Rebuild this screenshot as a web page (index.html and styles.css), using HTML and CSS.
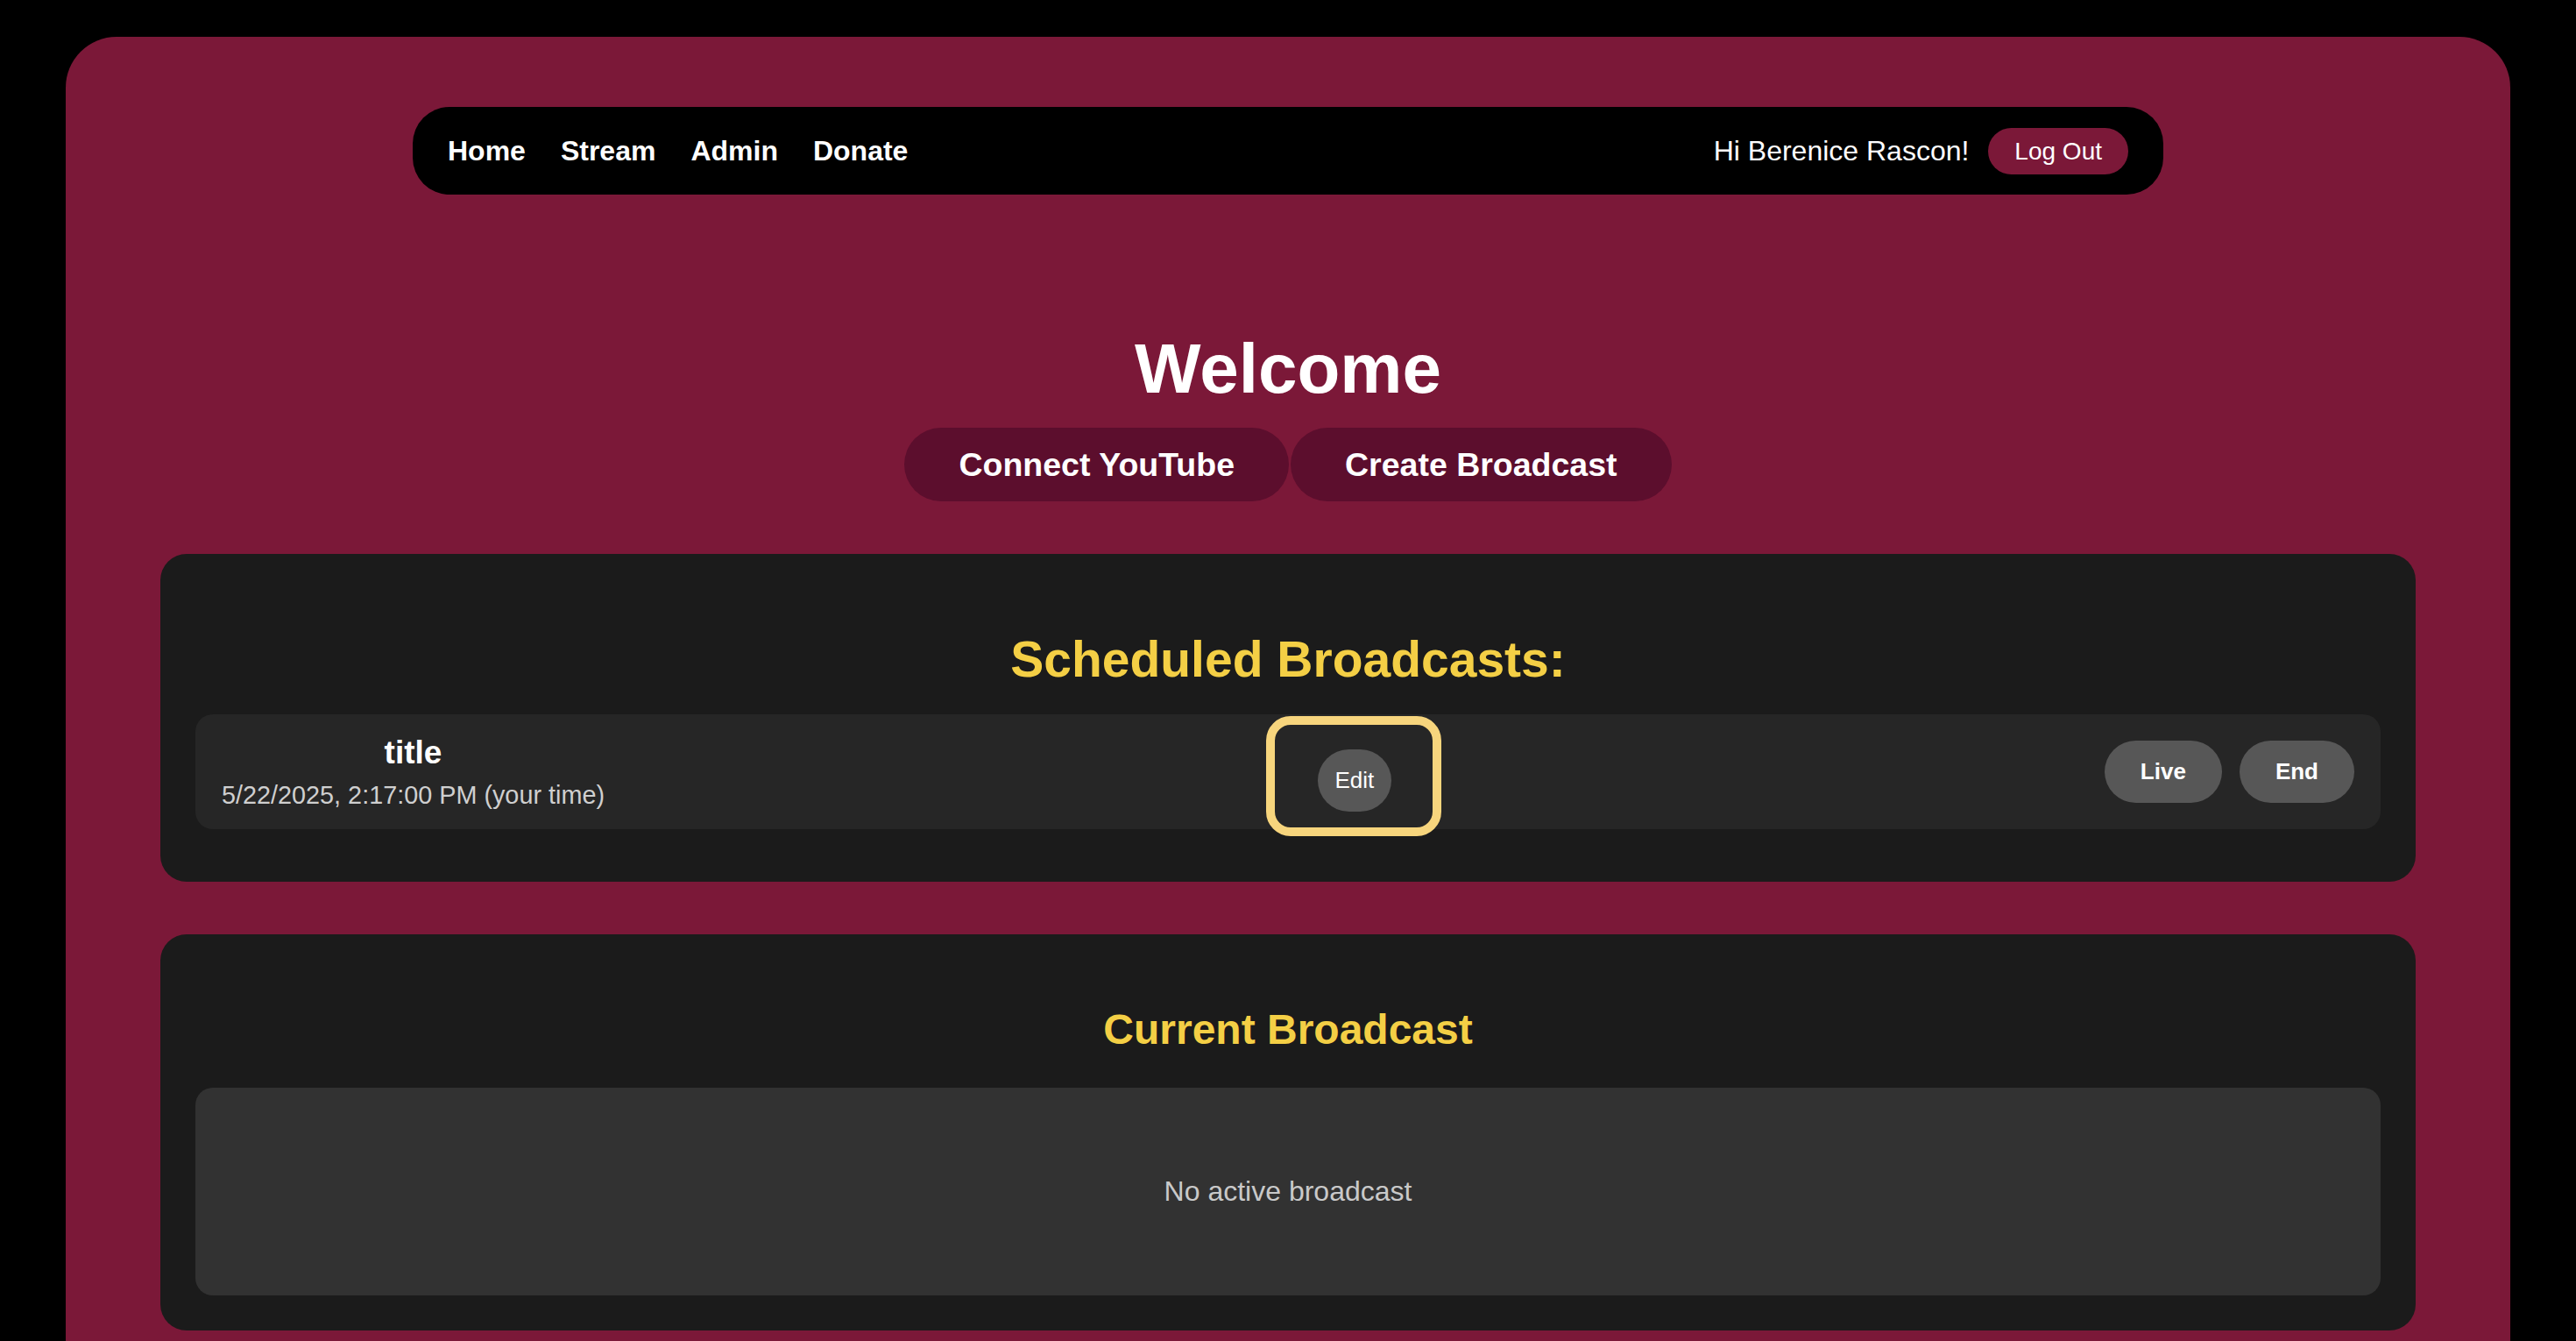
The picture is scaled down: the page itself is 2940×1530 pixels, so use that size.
FILE: index.html
```html
<!DOCTYPE html>
<html lang="en">
<head>
<meta charset="utf-8">
<title>Dashboard</title>
<link rel="stylesheet" href="styles.css">
</head>
<body>
<div class="frame">
  <nav class="nav">
    <div class="nav-links">
      <a class="nav-link" href="#">Home</a>
      <a class="nav-link" href="#">Stream</a>
      <a class="nav-link" href="#">Admin</a>
      <a class="nav-link" href="#">Donate</a>
    </div>
    <div class="nav-user">
      <span class="greeting">Hi Berenice Rascon!</span>
      <button class="logout">Log Out</button>
    </div>
  </nav>

  <section class="hero">
    <h1 class="hero-title">Welcome</h1>
    <div class="hero-actions">
      <button class="hero-btn">Connect YouTube</button>
      <button class="hero-btn">Create Broadcast</button>
    </div>
  </section>

  <section class="card card-scheduled">
    <h2 class="card-title card-title-lg">Scheduled Broadcasts:</h2>
    <div class="broadcast-row">
      <div class="broadcast-info">
        <div class="broadcast-name">title</div>
        <div class="broadcast-time">5/22/2025, 2:17:00 PM (your time)</div>
      </div>
      <div class="edit-wrap">
        <button class="pill-btn edit-btn">Edit</button>
        <span class="highlight"></span>
      </div>
      <div class="row-actions">
        <button class="pill-btn bold-btn">Live</button>
        <button class="pill-btn bold-btn">End</button>
      </div>
    </div>
  </section>

  <section class="card card-current">
    <h2 class="card-title card-title-md">Current Broadcast</h2>
    <div class="current-box">No active broadcast</div>
  </section>
</div>
</body>
</html>
```

FILE: styles.css
```css
* { box-sizing: border-box; }

html, body {
  margin: 0;
  padding: 0;
  background: #000;
}

body {
  font-family: "Liberation Sans", Arial, sans-serif;
  color: #fff;
  overflow: hidden;
}

button {
  font-family: "Liberation Sans", Arial, sans-serif;
  border: none;
  cursor: pointer;
}

.frame {
  margin: 42px 75px 0;
  background: #7b1838;
  border-radius: 58px;
  padding: 80px 108px 120px;
  min-height: 1600px;
}

/* NAV */
.nav {
  max-width: 1998px;
  margin: 0 auto;
  height: 100px;
  background: #000;
  border-radius: 42px;
  padding: 0 40px;
  display: flex;
  align-items: center;
  justify-content: space-between;
}

.nav-links {
  display: flex;
  gap: 40px;
}

.nav-link {
  color: #fff;
  text-decoration: none;
  font-weight: 700;
  font-size: 32px;
  line-height: 37px;
}

.nav-user {
  display: flex;
  align-items: center;
  gap: 22px;
}

.greeting {
  font-size: 32px;
  line-height: 37px;
}

.logout {
  background: #7b1838;
  color: #fff;
  font-size: 28px;
  line-height: 33px;
  padding: 10px 30px;
  border-radius: 30px;
}

/* HERO */
.hero {
  text-align: center;
  margin-top: 153px;
}

.hero-title {
  margin: 0;
  font-size: 80px;
  line-height: 92px;
  font-weight: 700;
}

.hero-actions {
  margin-top: 21px;
  display: flex;
  justify-content: center;
  gap: 2px;
}

.hero-btn {
  background: #5c0e2d;
  color: #fff;
  font-size: 37.5px;
  font-weight: 700;
  line-height: 44px;
  padding: 20px 62px;
  border-radius: 42px;
}

/* CARDS */
.card {
  background: #1b1b1b;
  border-radius: 30px;
  padding: 0 40px;
  text-align: center;
}

.card-scheduled {
  margin-top: 60px;
  padding-top: 87px;
  padding-bottom: 60px;
}

.card-current {
  margin-top: 60px;
  padding-top: 81px;
  padding-bottom: 40px;
}

.card-title {
  margin: 0;
  color: #f4cf45;
  font-weight: 700;
}

.card-title-lg {
  font-size: 57px;
  line-height: 66px;
  margin-bottom: 30px;
}

.card-title-md {
  font-size: 48px;
  line-height: 55px;
  margin-bottom: 39px;
}

.broadcast-row {
  background: #262626;
  border-radius: 20px;
  height: 131px;
  padding: 0 30px;
  display: flex;
  align-items: center;
  justify-content: space-between;
}

.broadcast-info {
  display: flex;
  flex-direction: column;
  align-items: center;
}

.broadcast-name {
  font-size: 37px;
  font-weight: 700;
  line-height: 42.5px;
}

.broadcast-time {
  margin-top: 10.5px;
  font-size: 28.8px;
  line-height: 33px;
  color: #cfcfcf;
}

.edit-wrap {
  position: relative;
  margin-top: 20px;
}

.pill-btn {
  background: #575757;
  color: #fff;
  font-size: 26px;
  line-height: 31px;
  padding: 20px;
  border-radius: 36px;
}

.edit-btn {
  display: block;
  padding: 20px 20px;
}

.highlight {
  position: absolute;
  left: -59px;
  top: -38px;
  width: 200px;
  height: 137px;
  border: 10px solid #f7d57d;
  border-radius: 28px;
  pointer-events: none;
}

.row-actions {
  display: flex;
  gap: 20px;
}

.bold-btn {
  font-weight: 700;
  padding: 20px 41px;
}

.current-box {
  background: #323232;
  border-radius: 20px;
  height: 237px;
  display: flex;
  align-items: center;
  justify-content: center;
  font-size: 32px;
  color: #c9c9c9;
}
```
